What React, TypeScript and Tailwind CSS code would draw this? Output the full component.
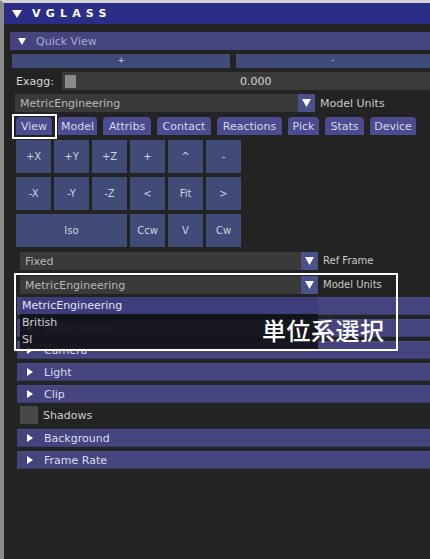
import React from 'react'

function TriDown({ w, h, color = '#ffffff', className = '' }: { w: number; h: number; color?: string; className?: string }) {
  return (
    <svg width={w} height={h} viewBox={`0 0 ${w} ${h}`} className={className}>
      <polygon points={`0,0 ${w},0 ${w / 2},${h}`} fill={color} />
    </svg>
  )
}

function TriRight({ w, h, color = '#ffffff', className = '' }: { w: number; h: number; color?: string; className?: string }) {
  return (
    <svg width={w} height={h} viewBox={`0 0 ${w} ${h}`} className={className}>
      <polygon points={`0,0 ${w},${h / 2} 0,${h}`} fill={color} />
    </svg>
  )
}

function Section({ label, className = '' }: { label: string; className?: string }) {
  return (
    <div className={`ml-[13px] h-[18px] shrink-0 bg-[#45447e] border-t border-t-[#4d4c88] border-b border-b-[#3a3a6c] flex items-center text-[#dcdcee] ${className}`}>
      <TriRight w={6} h={8} className="ml-[10px]" />
      <span className="ml-[11px] leading-none">{label}</span>
    </div>
  )
}

function Select({ value, label, className = '' }: { value: string; label: string; className?: string }) {
  return (
    <div className={`flex items-center h-[18px] shrink-0 ${className}`}>
      <div className="w-[281px] h-full bg-[#3a3a3a] flex items-center pl-[5px] text-[#b8b8b8]">{value}</div>
      <div className="w-[17px] h-full bg-[#4a5289] flex items-center justify-center">
        <TriDown w={9} h={8} />
      </div>
      <span className="ml-[5px] text-[#c8c8c8] text-[10px]">{label}</span>
    </div>
  )
}

const tabs = [
  { name: 'View', w: 'w-[36px]' },
  { name: 'Model', w: 'w-[39px]' },
  { name: 'Attribs', w: 'w-[48px]' },
  { name: 'Contact', w: 'w-[54px]' },
  { name: 'Reactions', w: 'w-[65px]' },
  { name: 'Pick', w: 'w-[31px]' },
  { name: 'Stats', w: 'w-[39px]' },
  { name: 'Device', w: 'w-[46px]' },
]

const row1 = ['+X', '+Y', '+Z', '+', '^', '-']
const row2 = ['-X', '-Y', '-Z', '<', 'Fit', '>']

function GridBtn({ label, wide = false }: { label: string; wide?: boolean }) {
  return (
    <div className={`${wide ? 'w-[111px]' : 'w-[35px]'} h-[33px] bg-[#414b78] flex items-center justify-center text-[#d0d2de] text-[10px]`}>
      {label}
    </div>
  )
}

export default function App() {
  return (
    <div className="relative w-[430px] h-[559px] overflow-hidden bg-[#232323] border-t-[3px] border-t-[#d2d2d2] border-l-4 border-l-[#8c8c8c] font-['DejaVu_Sans',sans-serif] text-[11px] leading-none">
      <div className="flex flex-col">
        {/* title bar */}
        <div className="h-[21px] bg-[#2c2d86] flex items-center text-white">
          <TriDown w={10} h={8} className="ml-[8px]" />
          <span className="ml-[10px] font-bold tracking-[5.2px] text-[11px]">VGLASS</span>
        </div>

        {/* Quick View */}
        <div className="mt-[8px] ml-[6px] h-[18px] bg-[#45447e] flex items-center text-[#abaad2]">
          <TriDown w={8} h={7} className="ml-[8px]" />
          <span className="ml-[10px]">Quick View</span>
        </div>

        <div className="mt-[4px] ml-[8px] flex gap-[6px] h-[14px]">
          <div className="w-[218px] bg-[#414b78] flex items-center justify-center text-[#d8d8e8] text-[8px]">+</div>
          <div className="flex-1 bg-[#414b78] flex items-center justify-center text-[#d8d8e8] text-[8px]">-</div>
        </div>

        <div className="mt-[4px] flex items-center h-[18px]">
          <span className="ml-[12px] w-[46px] text-[#d8d8d8]">Exagg:</span>
          <div className="flex-1 h-full bg-[#3b3b3b] flex items-center pl-[3px]">
            <div className="w-[11px] h-[13px] bg-[#8a8a8a]" />
            <span className="ml-[164px] text-[#d8d8d8]">0.000</span>
          </div>
        </div>

        <div className="mt-[4px] ml-[11px] flex items-center h-[18px]">
          <div className="w-[283px] h-full bg-[#3a3a3a] flex items-center pl-[5px] text-[#b8b8b8]">MetricEngineering</div>
          <div className="w-[17px] h-full bg-[#4a5289] flex items-center justify-center">
            <TriDown w={9} h={8} />
          </div>
          <span className="ml-[5px] text-[#cacaca]">Model Units</span>
        </div>

        {/* tabs */}
        <div className="mt-[5px] ml-[12px] flex gap-[6px] h-[18px]">
          {tabs.map((t) => (
            <div key={t.name} className={`relative ${t.w} h-full rounded-t-[4px] bg-[#4b4b8f] flex items-center justify-center text-[#d6d6ea]`}>
              {t.name}
              {t.name === 'View' && <div className="absolute -left-[4px] -top-[3px] -right-[5px] -bottom-[4px] border-2 border-white" />}
            </div>
          ))}
        </div>

        {/* view buttons */}
        <div className="mt-[5px] ml-[12px] flex flex-col gap-[4px]">
          <div className="flex gap-[3px]">
            {row1.map((l) => <GridBtn key={l} label={l} />)}
          </div>
          <div className="flex gap-[3px]">
            {row2.map((l) => <GridBtn key={l} label={l} />)}
          </div>
          <div className="flex gap-[3px]">
            <GridBtn label="Iso" wide />
            <GridBtn label="Ccw" />
            <GridBtn label="V" />
            <GridBtn label="Cw" />
          </div>
        </div>

        <Select value="Fixed" label="Ref Frame" className="mt-[5px] ml-[16px]" />
        <Select value="MetricEngineering" label="Model Units" className="mt-[6px] ml-[16px]" />

        <Section label="Transformation" className="mt-[3px]" />
        <Section label="Deformation" className="mt-[4px]" />
        <Section label="Camera" className="mt-[4px]" />
        <Section label="Light" className="mt-[4px]" />
        <Section label="Clip" className="mt-[4px]" />

        <div className="mt-[3px] ml-[16px] flex items-center h-[18px]">
          <div className="w-[18px] h-[18px] bg-[#484848]" />
          <span className="ml-[5px] text-[#cecece]">Shadows</span>
        </div>

        <Section label="Background" className="mt-[5px]" />
        <Section label="Frame Rate" className="mt-[4px]" />
      </div>

      {/* open dropdown list */}
      <div className="absolute left-[16px] top-[294px] w-[298px] h-[53px] bg-[rgba(18,18,26,0.93)] flex flex-col">
        <div className="h-[17px] bg-[#3d3d7c] flex items-center pl-[2px] text-[#e2e2f2]">MetricEngineering</div>
        <div className="h-[17px] flex items-center pl-[2px] text-[#d0d0d0]">British</div>
        <div className="h-[17px] flex items-center pl-[2px] text-[#d0d0d0]">SI</div>
      </div>

      {/* callout */}
      <div className="absolute left-[10px] top-[270px] w-[384px] h-[78px] border-2 border-white" />
      <div className="absolute left-[258px] top-[314px] text-white text-[24px] leading-[26px] tracking-[0.5px] font-medium font-['Noto_Sans_CJK_JP',sans-serif]">
        単位系選択
      </div>
    </div>
  )
}
